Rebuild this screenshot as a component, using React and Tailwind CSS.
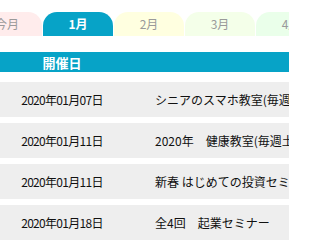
import React from "react";

const tabs = [
  { label: "今月", bg: "bg-[#ffecec]", text: "text-[#9a9a9a]" },
  { label: "1月", bg: "bg-[#07a3c7]", text: "text-white font-bold", active: true },
  { label: "2月", bg: "bg-[#ffffe0]", text: "text-[#9a9a9a]" },
  { label: "3月", bg: "bg-[#f4ffe9]", text: "text-[#9a9a9a]" },
  { label: "4月", bg: "bg-[#eaffea]", text: "text-[#9a9a9a]" },
];

const events = [
  { date: "2020年01月07日", title: "シニアのスマホ教室(毎週火曜日)" },
  { date: "2020年01月11日", title: "2020年　健康教室(毎週土曜日)" },
  { date: "2020年01月11日", title: "新春 はじめての投資セミナー" },
  { date: "2020年01月18日", title: "全4回　起業セミナー" },
];

export default function App() {
  return (
    <div
      className="w-[289px] h-[245px] overflow-hidden bg-white text-[#111]"
      style={{ fontFamily: '"Noto Sans CJK JP", "Noto Sans", sans-serif' }}
    >
      {/* month tabs */}
      <div className="flex gap-px pt-3 -ml-[28px] w-[400px]">
        {tabs.map((t) => (
          <div
            key={t.label}
            className={`w-[70px] h-[24px] shrink-0 rounded-t-[14px] flex items-center justify-center text-[12px] ${t.bg} ${t.text}`}
          >
            {t.label}
          </div>
        ))}
      </div>

      {/* table header */}
      <div className="mt-4 h-[20px] bg-[#07a3c7] flex items-center">
        <div className="w-[124px] text-center text-white font-bold text-[13px] leading-none">
          開催日
        </div>
      </div>

      {/* rows */}
      <div className="mt-[10px] flex flex-col gap-[6px]">
        {events.map((e, i) => (
          <div
            key={i}
            className="h-[35px] bg-[#eeeeee] flex items-center whitespace-nowrap text-[12px]"
          >
            <div className="w-[124px] shrink-0 text-center tracking-[-0.7px]">{e.date}</div>
            <div className="pl-[31px]">{e.title}</div>
          </div>
        ))}
      </div>
    </div>
  );
}
